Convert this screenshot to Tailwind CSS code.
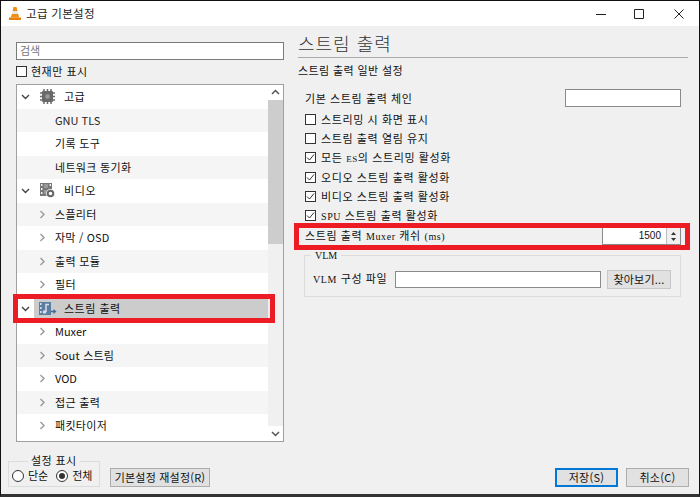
<!DOCTYPE html>
<html lang="ko">
<head>
  <meta charset="UTF-8">
  <title>고급 기본설정</title>
  <script src="https://cdn.jsdelivr.net/npm/@tailwindcss/browser@4"></script>
</head>
<body class="w-[700px] h-[497px] overflow-hidden bg-[#f0f0f0] font-['Noto_Sans_CJK_KR','Noto_Sans',sans-serif] text-[11px] leading-none text-[#111]">
  <div class="relative w-[700px] h-[497px] flex flex-col border-t border-l border-r border-[#111] border-b-[3px] border-b-[#333]">

    <!-- Title bar -->
    <div class="h-[25px] shrink-0 bg-white flex items-center pl-[7px]">
      <svg width="14" height="15" viewBox="0 0 14 15"><path d="M5.5 1h3l1 4h-5z" fill="#f28c13"/><path d="M4.5 5h5l.7 3H3.8z" fill="#e8e8e8"/><path d="M3.8 8h6.4l1 3.5H2.8z" fill="#f28c13"/><path d="M1 11.5h12V14H1z" fill="#e67e0c"/></svg>
      <span class="ml-[4px] text-[11.5px] tracking-[0.3px] text-[#222]">고급 기본설정</span>
      <div class="ml-auto flex items-center text-[#222]">
        <svg class="mr-[28px]" width="10" height="10" viewBox="0 0 10 10"><path d="M0 5.5h10" stroke="#222"/></svg>
        <svg class="mr-[30px]" width="10" height="10" viewBox="0 0 10 10"><path d="M.5.5h9v9h-9z" fill="none" stroke="#222"/></svg>
        <svg class="mr-[15px]" width="10" height="10" viewBox="0 0 10 10"><path d="M.5.5l9 9M9.5.5l-9 9" stroke="#222"/></svg>
      </div>
    </div>

    <div class="flex-1 flex">
      <!-- Left column -->
      <div class="w-[297px] shrink-0 flex flex-col">
        <div class="ml-[15px] mt-[16px] w-[268px] h-[18px] border border-[#7a7a7a] bg-white flex items-center pl-[3px] pb-[1px] text-[#777]">검색</div>
        <div class="ml-[15px] mt-[5px] h-[12px] flex items-center gap-[4px]">
          <span class="w-[11px] h-[11px] border border-[#333] bg-white"></span>
          <span class="tracking-[0.5px]">현재만 표시</span>
        </div>

        <!-- Tree -->
        <div class="ml-[15px] mt-[7px] w-[268px] h-[358px] border border-[#a0a0a0] bg-white flex overflow-hidden">
          <div class="w-[251px] shrink-0 flex flex-col">
            <div class="h-[23.5px] shrink-0 bg-white flex items-center">
              <svg class="ml-[4px]" width="9" height="9" viewBox="0 0 9 9"><path d="M1 3l3.5 3.5L8 3" fill="none" stroke="#444" stroke-width="1.4"/></svg>
              <svg class="ml-[10px]" width="15" height="15" viewBox="0 0 15 15"><path d="M3 2h9a1 1 0 0 1 1 1v9a1 1 0 0 1-1 1H3a1 1 0 0 1-1-1V3a1 1 0 0 1 1-1z" fill="#6a6a6a"/><path d="M4 0v15M7.500 0v15M11 0v15M0 4h15M0 7.500h15M0 11h15" stroke="#6a6a6a" stroke-width="1.500"/><path d="M5.500 5.500h4v4h-4z" fill="#9a9a9a"/></svg>
              <span class="ml-[9px] tracking-[0.3px]">고급</span>
            </div>
            <div class="h-[23.5px] shrink-0 bg-[#f5f5f5] flex items-center pl-[38px] text-[#222]">GNU TLS</div>
            <div class="h-[23.5px] shrink-0 bg-white flex items-center pl-[38px] tracking-[0.3px]">기록 도구</div>
            <div class="h-[23.5px] shrink-0 bg-[#f5f5f5] flex items-center pl-[38px] tracking-[0.3px]">네트워크 동기화</div>
            <div class="h-[23.5px] shrink-0 bg-white flex items-center">
              <svg class="ml-[4px]" width="9" height="9" viewBox="0 0 9 9"><path d="M1 3l3.5 3.5L8 3" fill="none" stroke="#444" stroke-width="1.4"/></svg>
              <svg class="ml-[10px]" width="15" height="15" viewBox="0 0 15 15"><path d="M0 0h12v13H0z" fill="#777"/><path d="M1 1h1.500v2H1zM1 5h1.500v2H1zM1 9h1.500v2H1zM9.500 1H11v2H9.500z" fill="#eee"/><path d="M4 1h4v4H4zM4 7h2v4H4z" fill="#999"/><circle cx="10.500" cy="10.500" r="4.500" fill="white"/><circle cx="10.500" cy="10.500" r="2.800" fill="none" stroke="#666" stroke-width="2"/></svg>
              <span class="ml-[9px] tracking-[0.6px]">비디오</span>
            </div>
            <div class="h-[23.5px] shrink-0 bg-[#f5f5f5] flex items-center pl-[22px]">
              <svg class="w-[7px] h-[9px] mr-[9px]" viewBox="0 0 7 9"><path d="M1.500 1l3.500 3.500L1.500 8" fill="none" stroke="#999" stroke-width="1.400"/></svg>
              <span class="tracking-[0.3px]">스플리터</span>
            </div>
            <div class="h-[23.5px] shrink-0 bg-white flex items-center pl-[22px]">
              <svg class="w-[7px] h-[9px] mr-[9px]" viewBox="0 0 7 9"><path d="M1.500 1l3.500 3.500L1.500 8" fill="none" stroke="#999" stroke-width="1.400"/></svg>
              <span class="tracking-[0.2px]">자막 / OSD</span>
            </div>
            <div class="h-[23.5px] shrink-0 bg-[#f5f5f5] flex items-center pl-[22px]">
              <svg class="w-[7px] h-[9px] mr-[9px]" viewBox="0 0 7 9"><path d="M1.500 1l3.500 3.500L1.500 8" fill="none" stroke="#999" stroke-width="1.400"/></svg>
              <span class="tracking-[0.3px]">출력 모듈</span>
            </div>
            <div class="h-[23.5px] shrink-0 bg-white flex items-center pl-[22px]">
              <svg class="w-[7px] h-[9px] mr-[9px]" viewBox="0 0 7 9"><path d="M1.500 1l3.500 3.500L1.500 8" fill="none" stroke="#999" stroke-width="1.400"/></svg>
              <span class="tracking-[0.3px]">필터</span>
            </div>
            <div class="h-[23.5px] shrink-0 bg-white flex items-center">
              <svg class="ml-[4px]" width="9" height="9" viewBox="0 0 9 9"><path d="M1 3l3.5 3.5L8 3" fill="none" stroke="#444" stroke-width="1.4"/></svg>
              <div class="ml-[4px] flex-1 self-stretch bg-[#cccccc] flex items-center pl-[4px]">
                <svg width="19" height="17" viewBox="0 0 19 17"><path d="M1 2h12v13H1z" fill="#5a7fa3"/><path d="M2 3h1.500v2H2zM2 7h1.500v2H2zM2 11h1.500v2H2z" fill="#dde"/><path d="M8 12V4.500h3" fill="none" stroke="#dde" stroke-width="1.500"/><circle cx="6.500" cy="12" r="1.800" fill="#dde"/><path d="M13 11.500h4" stroke="#3f6d9a" stroke-width="1.500"/><path d="M15.500 9l3 2.500-3 2.500z" fill="#3f6d9a"/></svg>
                <span class="ml-[7px] tracking-[0.5px]">스트림 출력</span>
              </div>
            </div>
            <div class="h-[23.5px] shrink-0 bg-white flex items-center pl-[22px]">
              <svg class="w-[7px] h-[9px] mr-[9px]" viewBox="0 0 7 9"><path d="M1.500 1l3.500 3.500L1.500 8" fill="none" stroke="#999" stroke-width="1.400"/></svg>
              <span>Muxer</span>
            </div>
            <div class="h-[23.5px] shrink-0 bg-[#f5f5f5] flex items-center pl-[22px]">
              <svg class="w-[7px] h-[9px] mr-[9px]" viewBox="0 0 7 9"><path d="M1.500 1l3.500 3.500L1.500 8" fill="none" stroke="#999" stroke-width="1.400"/></svg>
              <span class="tracking-[0.2px]">Sout 스트림</span>
            </div>
            <div class="h-[23.5px] shrink-0 bg-white flex items-center pl-[22px]">
              <svg class="w-[7px] h-[9px] mr-[9px]" viewBox="0 0 7 9"><path d="M1.500 1l3.500 3.500L1.500 8" fill="none" stroke="#999" stroke-width="1.400"/></svg>
              <span>VOD</span>
            </div>
            <div class="h-[23.5px] shrink-0 bg-[#f5f5f5] flex items-center pl-[22px]">
              <svg class="w-[7px] h-[9px] mr-[9px]" viewBox="0 0 7 9"><path d="M1.500 1l3.500 3.500L1.500 8" fill="none" stroke="#999" stroke-width="1.400"/></svg>
              <span class="tracking-[0.3px]">접근 출력</span>
            </div>
            <div class="h-[23.5px] shrink-0 bg-white flex items-center pl-[22px]">
              <svg class="w-[7px] h-[9px] mr-[9px]" viewBox="0 0 7 9"><path d="M1.500 1l3.500 3.500L1.500 8" fill="none" stroke="#999" stroke-width="1.400"/></svg>
              <span class="tracking-[0.3px]">패킷타이저</span>
            </div>
          </div>
          <!-- Scrollbar -->
          <div class="w-[15px] shrink-0 bg-[#f0f0f0] flex flex-col">
            <div class="h-[15px] shrink-0 bg-white flex items-center justify-center">
              <svg width="9" height="7" viewBox="0 0 9 7"><path d="M1 5l3.500-3.500L8 5" fill="none" stroke="#555" stroke-width="1.500"/></svg>
            </div>
            <div class="h-[144px] shrink-0 bg-[#cdcdcd]"></div>
            <div class="flex-1"></div>
            <div class="h-[15px] shrink-0 bg-white flex items-center justify-center">
              <svg width="9" height="7" viewBox="0 0 9 7"><path d="M1 2l3.500 3.500L8 2" fill="none" stroke="#555" stroke-width="1.500"/></svg>
            </div>
          </div>
        </div>

        <!-- Bottom left -->
        <div class="ml-[7px] mt-[19px] flex items-end">
          <div class="relative w-[92px] h-[26px] border border-[#dcdcdc] flex items-center pl-[3px] pt-[3px]">
            <span class="absolute left-[19px] -top-[7px] bg-[#f0f0f0] px-[3px] tracking-[0.4px]">설정 표시</span>
            <span class="w-[12px] h-[12px] rounded-full border border-[#333] bg-white"></span>
            <span class="ml-[4px]">단순</span>
            <span class="ml-[8px] w-[12px] h-[12px] rounded-full border border-[#333] bg-white flex items-center justify-center"><span class="w-[6px] h-[6px] rounded-full bg-[#333]"></span></span>
            <span class="ml-[4px]">전체</span>
          </div>
          <div class="ml-[10px] w-[100px] h-[19px] bg-[#e1e1e1] border border-[#adadad] flex items-center justify-center tracking-[0.2px]">기본설정 재설정(R)</div>
        </div>
      </div>

      <!-- Right column -->
      <div class="flex-1 flex flex-col">
        <div class="h-[32px] mr-[11px] pt-[8px] border-b border-[#aaaaaa] text-[18px] tracking-[1px] text-[#333] font-light">스트림 출력</div>
        <div class="mt-[6px] h-[12px] flex items-center tracking-[0.4px]">스트림 출력 일반 설정</div>

        <div class="mt-[13px] h-[18px] pl-[7px] pr-[18px] flex items-center justify-between">
          <span class="tracking-[0.6px]">기본 스트림 출력 체인</span>
          <span class="w-[116px] h-[18px] bg-white border border-[#8a8a8a]"></span>
        </div>

        <div class="mt-[3px] pl-[7px] flex flex-col">
          <div class="h-[19.2px] flex items-center gap-[5px]"><span class="w-[11px] h-[11px] border border-[#333] bg-white"></span><span class="tracking-[0.6px]">스트리밍 시 화면 표시</span></div>
          <div class="h-[19.2px] flex items-center gap-[5px]"><span class="w-[11px] h-[11px] border border-[#333] bg-white"></span><span class="tracking-[0.6px]">스트림 출력 열림 유지</span></div>
          <div class="h-[19.2px] flex items-center gap-[5px]"><span class="w-[11px] h-[11px] border border-[#333] bg-white flex items-center justify-center"><svg width="9" height="9" viewBox="0 0 9 9"><path d="M1 4.500l2.500 2.500L8 1.500" fill="none" stroke="#333"/></svg></span><span class="tracking-[0.6px]">모든 <span class="font-['Liberation_Serif'] text-[9px]">ES</span>의 스트리밍 활성화</span></div>
          <div class="h-[19.2px] flex items-center gap-[5px]"><span class="w-[11px] h-[11px] border border-[#333] bg-white flex items-center justify-center"><svg width="9" height="9" viewBox="0 0 9 9"><path d="M1 4.500l2.500 2.500L8 1.500" fill="none" stroke="#333"/></svg></span><span class="tracking-[0.6px]">오디오 스트림 출력 활성화</span></div>
          <div class="h-[19.2px] flex items-center gap-[5px]"><span class="w-[11px] h-[11px] border border-[#333] bg-white flex items-center justify-center"><svg width="9" height="9" viewBox="0 0 9 9"><path d="M1 4.500l2.500 2.500L8 1.500" fill="none" stroke="#333"/></svg></span><span class="tracking-[0.6px]">비디오 스트림 출력 활성화</span></div>
          <div class="h-[19.2px] flex items-center gap-[5px]"><span class="w-[11px] h-[11px] border border-[#333] bg-white flex items-center justify-center"><svg width="9" height="9" viewBox="0 0 9 9"><path d="M1 4.500l2.500 2.500L8 1.500" fill="none" stroke="#333"/></svg></span><span class="tracking-[0.6px]"><span class="font-['Liberation_Serif'] text-[10px]">SPU</span> 스트림 출력 활성화</span></div>
        </div>

        <div class="mt-[2px] h-[18px] pl-[7px] pr-[18px] flex items-center justify-between">
          <span class="tracking-[0.6px]">스트림 출력 <span class="font-['Liberation_Serif'] text-[10px]">Muxer</span> 캐쉬 <span class="font-['Liberation_Serif'] text-[10px]">(ms)</span></span>
          <div class="w-[79px] h-[18px] bg-white border border-[#8a8a8a] flex">
            <span class="flex-1 flex items-center justify-end pr-[5px] font-['Liberation_Sans'] text-[10px]">1500</span>
            <span class="w-[14px] border-l border-[#bbb] bg-[#f0f0f0] flex flex-col items-center justify-around py-[2px]">
              <svg width="5" height="3" viewBox="0 0 7 4"><path d="M3.500 0L7 4H0z" fill="#333"/></svg>
              <svg width="5" height="3" viewBox="0 0 7 4"><path d="M3.500 4L7 0H0z" fill="#333"/></svg>
            </span>
          </div>
        </div>

        <!-- VLM group -->
        <div class="relative mt-[10px] ml-[6px] mr-[18px] h-[42px] border border-[#dcdcdc] flex items-center pl-[8px] pt-[6px]">
          <span class="absolute left-[6px] -top-[5px] bg-[#f0f0f0] px-[4px] font-['Liberation_Serif'] text-[10px]">VLM</span>
          <span class="w-[82px] tracking-[0.6px]"><span class="font-['Liberation_Serif'] text-[10px]">VLM</span> 구성 파일</span>
          <span class="w-[206px] h-[17px] bg-white border border-[#8a8a8a]"></span>
          <span class="ml-[6px] w-[64px] h-[19px] bg-[#e1e1e1] border border-[#c8c8c8] flex items-center justify-center tracking-[0.2px]">찾아보기...</span>
        </div>

        <!-- Save / Cancel -->
        <div class="mt-auto mb-[7px] mr-[10px] flex justify-end gap-[8px]">
          <div class="w-[63px] h-[19px] bg-[#e1e1e1] border-2 border-[#0078d7] flex items-center justify-center tracking-[0.3px]">저장(S)</div>
          <div class="w-[63px] h-[19px] bg-[#e1e1e1] border border-[#adadad] flex items-center justify-center tracking-[0.3px]">취소(C)</div>
        </div>
      </div>
    </div>

    <!-- Red annotation boxes -->
    <div class="absolute left-[12px] top-[293px] w-[262px] h-[29px] border-[5px] border-[#ed1c24]"></div>
    <div class="absolute left-[293px] top-[222px] w-[396px] h-[27px] border-[5px] border-[#ed1c24]"></div>
  </div>
</body>
</html>
